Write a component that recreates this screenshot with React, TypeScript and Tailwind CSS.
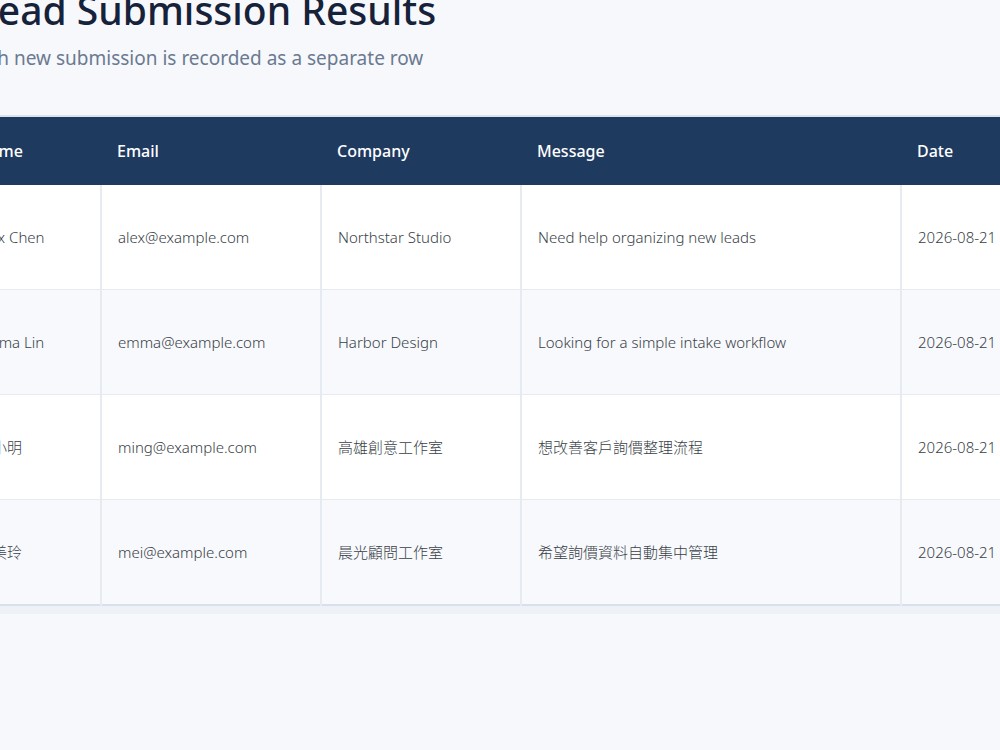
import React from 'react';

const rows = [
  { name: 'Alex Chen', email: 'alex@example.com', company: 'Northstar Studio', message: 'Need help organizing new leads', date: '2026-08-21' },
  { name: 'Emma Lin', email: 'emma@example.com', company: 'Harbor Design', message: 'Looking for a simple intake workflow', date: '2026-08-21' },
  { name: '王小明', email: 'ming@example.com', company: '高雄創意工作室', message: '想改善客戶詢價整理流程', date: '2026-08-21' },
  { name: '林美玲', email: 'mei@example.com', company: '晨光顧問工作室', message: '希望詢價資料自動集中管理', date: '2026-08-21' },
];

const cols = ['w-[140px]', 'w-[220px]', 'w-[200px]', 'w-[380px]', 'w-[160px]'];

function App(): React.ReactElement {
  return (
    <div className="w-[1000px] h-[750px] overflow-hidden bg-[#f6f8fc]" style={{ fontFamily: '"Noto Sans", "Noto Sans CJK TC", sans-serif' }}>
      <div className="ml-[-39px] w-[1100px]">
        <h1 className="ml-[16px] mt-[-16px] text-[39px] leading-[52px] font-medium text-[#16223a]">Lead Submission Results</h1>
        <p className="ml-[6px] mt-[8px] text-[19px] text-[#6b7a90]">Each new submission is recorded as a separate row</p>
        <table className="mt-[42px] border-t-2 border-[#dde3ec] border-collapse table-fixed">
          <thead>
            <tr className="bg-[#1f3a5f] h-[69px]">
              {['Name', 'Email', 'Company', 'Message', 'Date'].map((h, i) => (
                <th key={h} className={`${cols[i]} px-4 text-left text-[16px] font-medium text-white`}>{h}</th>
              ))}
            </tr>
          </thead>
          <tbody className="border-b-2 border-[#d8e0ec]">
            {rows.map((r, ri) => (
              <tr key={r.email} className={`h-[105px] ${ri % 2 ? 'bg-[#f7f9fc]' : 'bg-white'} ${ri ? 'border-t border-[#e6ebf2]' : ''}`}>
                {[r.name, r.email, r.company, r.message, r.date].map((c, i) => (
                  <td key={i} className={`${cols[i]} px-4 text-[15px] text-[#3a3f48] font-light ${i < 4 ? 'border-r-2 border-[#e6ebf2]' : ''}`}>{c}</td>
                ))}
              </tr>
            ))}
          </tbody>
        </table>
        <div className="h-[8px] w-[1100px] bg-[#eef1f6]" />
      </div>
    </div>
  );
}

export default App;
